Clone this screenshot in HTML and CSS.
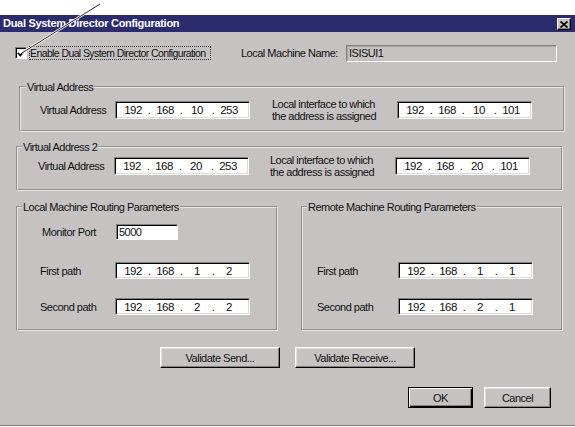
FILE: index.html
```html
<!DOCTYPE html>
<html>
<head>
<meta charset="utf-8">
<title>Dual System Director Configuration</title>
<link rel="stylesheet" href="styles.css">
</head>
<body>
<div class="window">
  <div class="titlebar">
    <span class="title">Dual System Director Configuration</span>
    <span class="close-btn"><svg width="8" height="7" viewBox="0 0 8 7"><path d="M0.5 0.5 L7.5 6.5 M7.5 0.5 L0.5 6.5" stroke="#000" stroke-width="1.6" fill="none"/></svg></span>
  </div>
  <div class="client">
    <div class="row-top">
      <span class="checkbox"><svg width="9" height="9" viewBox="0 0 9 9"><path d="M1 4 L3.3 6.5 L8 1.5" stroke="#000" stroke-width="1.8" fill="none"/></svg></span>
      <span class="check-label">Enable Dual System Director Configuration</span>
      <span class="lmn-label">Local Machine Name:</span>
      <span class="textbox disabled">ISISUI1</span>
    </div>

    <fieldset class="group g1">
      <legend>Virtual Address</legend>
      <div class="addr-row">
        <span class="lbl lbl-va">Virtual Address</span>
        <span class="ip"><span>192</span><i>.</i><span>168</span><i>.</i><span>10</span><i>.</i><span>253</span></span>
        <span class="lbl lbl-li">Local interface to which<br>the address is assigned</span>
        <span class="ip"><span>192</span><i>.</i><span>168</span><i>.</i><span>10</span><i>.</i><span>101</span></span>
      </div>
    </fieldset>

    <fieldset class="group g2">
      <legend>Virtual Address 2</legend>
      <div class="addr-row">
        <span class="lbl lbl-va">Virtual Address</span>
        <span class="ip"><span>192</span><i>.</i><span>168</span><i>.</i><span>20</span><i>.</i><span>253</span></span>
        <span class="lbl lbl-li">Local interface to which<br>the address is assigned</span>
        <span class="ip"><span>192</span><i>.</i><span>168</span><i>.</i><span>20</span><i>.</i><span>101</span></span>
      </div>
    </fieldset>

    <div class="routing">
      <fieldset class="group rg local">
        <legend>Local Machine Routing Parameters</legend>
        <div class="r-row r-first">
          <span class="lbl lbl-mp">Monitor Port</span>
          <span class="textbox port">5000</span>
        </div>
        <div class="r-row r-second">
          <span class="lbl">First path</span>
          <span class="ip ip-s"><span>192</span><i>.</i><span>168</span><i>.</i><span>1</span><i>.</i><span>2</span></span>
        </div>
        <div class="r-row r-third">
          <span class="lbl">Second path</span>
          <span class="ip ip-s"><span>192</span><i>.</i><span>168</span><i>.</i><span>2</span><i>.</i><span>2</span></span>
        </div>
      </fieldset>
      <fieldset class="group rg remote">
        <legend>Remote Machine Routing Parameters</legend>
        <div class="r-row r-first"></div>
        <div class="r-row r-second">
          <span class="lbl">First path</span>
          <span class="ip ip-s"><span>192</span><i>.</i><span>168</span><i>.</i><span>1</span><i>.</i><span>1</span></span>
        </div>
        <div class="r-row r-third">
          <span class="lbl">Second path</span>
          <span class="ip ip-s"><span>192</span><i>.</i><span>168</span><i>.</i><span>2</span><i>.</i><span>1</span></span>
        </div>
      </fieldset>
    </div>

    <div class="btn-row validate">
      <button class="btn wide">Validate Send...</button>
      <button class="btn wide">Validate Receive...</button>
    </div>
    <div class="btn-row final">
      <button class="btn default ok">OK</button>
      <button class="btn cancel">Cancel</button>
    </div>
  </div>
</div>
<svg class="callout" width="110" height="60" viewBox="0 0 110 60">
  <path d="M100 4 L22 53" stroke="#fff" stroke-width="2.6" fill="none"/>
  <path d="M100 4 L22 53" stroke="#222" stroke-width="1" fill="none"/>
</svg>
</body>
</html>
```

FILE: styles.css
```css
html, body {
  margin: 0;
  padding: 0;
  background: #fff;
}
body {
  position: relative;
  width: 575px;
  height: 427px;
  overflow: hidden;
  font-family: "Liberation Sans", Arial, sans-serif;
  font-size: 11px;
  letter-spacing: -0.5px;
  color: #111;
}
.window {
  margin-top: 15px;
  width: 575px;
  height: 410px;
  background: #c6c2c2;
  border-bottom: 1px solid #7c7878;
}
.titlebar {
  height: 17px;
  background: #2b2b6e;
  display: flex;
  align-items: flex-start;
  justify-content: space-between;
}
.title {
  color: #fff;
  font-weight: bold;
  line-height: 17px;
  padding-left: 3px;
  letter-spacing: -0.3px;
}
.close-btn {
  width: 14px;
  height: 12px;
  margin-top: 3px;
  margin-right: 4px;
  box-sizing: border-box;
  background: #c6c2c2;
  border: 1px solid;
  border-color: #fff #000 #000 #fff;
  box-shadow: inset -1px -1px #808080;
  display: flex;
  align-items: center;
  justify-content: center;
}
.client {
  display: flex;
  flex-direction: column;
}
.row-top {
  margin-top: 13px;
  height: 16px;
  display: flex;
  align-items: center;
}
.checkbox {
  margin-left: 15px;
  width: 12px;
  height: 12px;
  box-sizing: border-box;
  background: #fff;
  border: 1px solid;
  border-color: #808080 #fff #fff #808080;
  box-shadow: inset 1px 1px #000;
  display: flex;
  align-items: center;
  justify-content: center;
}
.check-label {
  margin-left: 2px;
  width: 180px;
  height: 12px;
  line-height: 12px;
  border: 1px dotted #333;
  white-space: nowrap;
  font-size: 10.5px;
  letter-spacing: -0.6px;
}
.lmn-label {
  margin-left: 30px;
  width: 105px;
  white-space: nowrap;
}
.textbox {
  box-sizing: border-box;
  border: 1px solid;
  border-color: #808080 #fff #fff #808080;
  padding-left: 2px;
  white-space: nowrap;
}
.textbox.disabled {
  width: 211px;
  height: 17px;
  line-height: 15px;
  background: #c6c2c2;
  box-shadow: inset 1px 1px #a8a4a4;
}
.group {
  margin: 0;
  box-sizing: border-box;
  border: 2px groove #e6e3e3;
  min-width: 0;
  padding-left: 0;
  padding-right: 0;
}
.group legend {
  padding: 0 1px;
  margin-left: 4px;
  line-height: 12px;
}
.g1 {
  margin-top: 20px;
  margin-left: 19px;
  width: 546px;
  padding-top: 5px;
  padding-bottom: 8px;
}
.g1 legend { margin-left: 5px; }
.g1 .addr-row { padding-left: 19px; }
.g2 {
  margin-top: 9px;
  margin-left: 16px;
  width: 547px;
  padding-top: 1px;
  padding-bottom: 11px;
}
.g2 .addr-row { padding-left: 20px; }
.addr-row {
  height: 24px;
  display: flex;
  align-items: center;
}
.lbl {
  white-space: nowrap;
}
.lbl-va { width: 75px; }
.g2 .lbl-va { width: 76px; }
.lbl-li {
  margin-left: 22px;
  width: 125px;
  line-height: 12px;
}
.g2 .lbl-li { margin-left: 21px; }
.ip {
  box-sizing: border-box;
  width: 135px;
  height: 18px;
  background: #fff;
  border: 1px solid;
  border-color: #808080 #fff #fff #808080;
  box-shadow: inset 1px 1px #000, inset -1px -1px #dcd9d9;
  display: flex;
  align-items: center;
  padding-left: 4px;
  font-size: 11.5px;
  letter-spacing: -0.5px;
}
.ip span {
  width: 26px;
  text-align: center;
}
.ip i {
  font-style: normal;
  width: 6px;
  text-align: center;
}
.ip-s { height: 17px; }
.routing {
  margin-top: 10px;
  display: flex;
  gap: 23px;
  margin-left: 16px;
}
.rg {
  width: 262px;
  padding-top: 11px;
  padding-bottom: 14px;
}
.local .r-row { padding-left: 22px; }
.remote .r-row { padding-left: 14px; }
.r-row {
  display: flex;
  align-items: center;
}
.r-first { height: 16px; }
.r-second { height: 17px; margin-top: 22px; }
.r-third { height: 17px; margin-top: 19px; }
.local .lbl { width: 75px; }
.local .lbl-mp { width: 74px; padding-left: 2px; }
.remote .lbl { width: 81px; }
.textbox.port {
  width: 62px;
  height: 16px;
  line-height: 14px;
  background: #fff;
  box-shadow: inset 1px 1px #000;
}
.btn-row {
  display: flex;
}
.validate {
  margin-top: 16px;
  margin-left: 160px;
  gap: 15px;
}
.final {
  margin-top: 19px;
  margin-left: 408px;
  gap: 11px;
}
.btn {
  margin: 0;
  padding: 0;
  height: 21px;
  box-sizing: border-box;
  background: #c6c2c2;
  font-family: "Liberation Sans", Arial, sans-serif;
  font-size: 11px;
  letter-spacing: -0.5px;
  color: #111;
  border: 1px solid;
  border-color: #fff #000 #000 #fff;
  box-shadow: inset -1px -1px #808080, inset 1px 1px #e2dfdf;
}
.wide { width: 120px; }
.ok { width: 65px; }
.cancel { width: 67px; }
.btn.default {
  border-color: #000;
  box-shadow: inset 1px 1px #fff, inset -1px -1px #000, inset -2px -2px #808080;
}
.callout {
  position: absolute;
  left: 0;
  top: 0;
}
```
